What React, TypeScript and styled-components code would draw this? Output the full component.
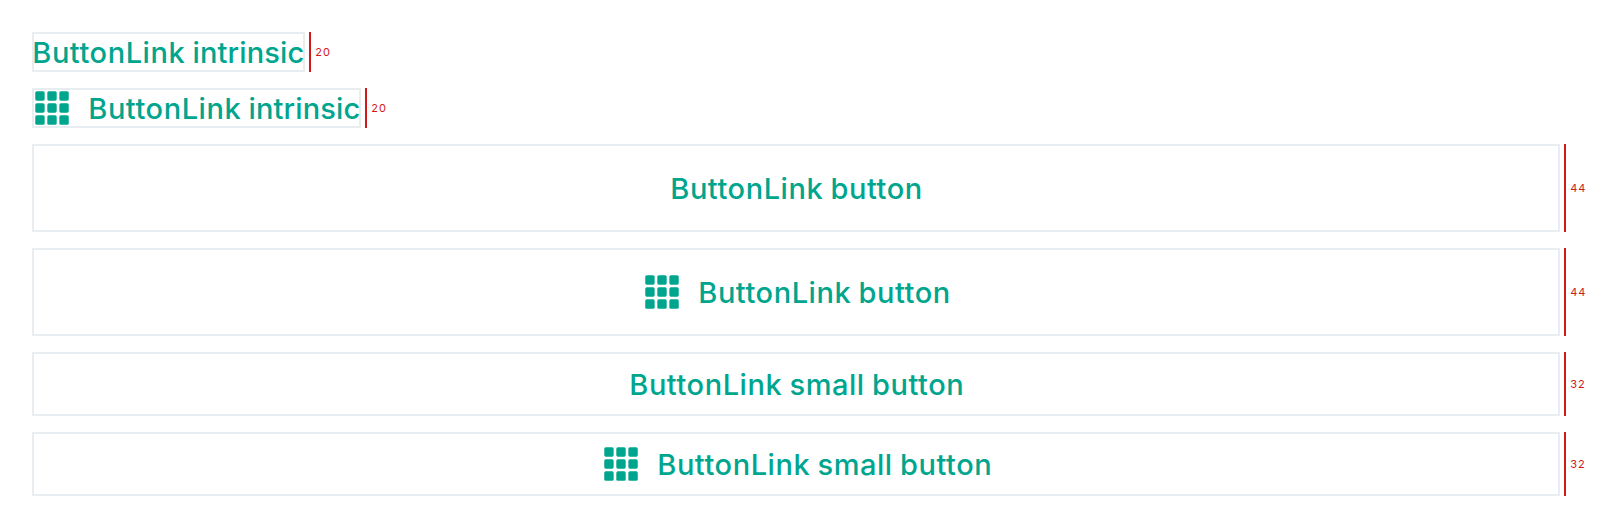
import React from 'react';
import styled, { createGlobalStyle } from 'styled-components';

const GlobalStyle = createGlobalStyle`
  body { margin: 0; background: #fff; }
  * { box-sizing: border-box; }
`;

const Page = styled.main`
  display: flex;
  flex-direction: column;
  gap: 16px;
  padding: 32px;
  height: 528px;
`;

const Row = styled.div<{ $height: number }>`
  display: flex;
  height: ${(p) => p.$height}px;
`;

const LinkButton = styled.button<{ $width?: number }>`
  display: flex;
  align-items: center;
  justify-content: ${(p) => (p.$width ? 'flex-start' : 'center')};
  gap: 16px;
  width: ${(p) => (p.$width ? `${p.$width}px` : '1528px')};
  padding: 0;
  border: 0;
  background: transparent;
  box-shadow: inset 0 0 0 2px #e8edf1;
  color: #00a58e;
`;

const Label = styled.span<{ $width: number }>`
  width: ${(p) => p.$width}px;
  padding-top: 1px;
  padding-left: 0.3px;
  font: 500 29px/39px Inter, sans-serif;
  font-optical-sizing: none;
  letter-spacing: 0.54px;
  word-spacing: -0.9px;
  white-space: nowrap;
  text-align: left;
`;

const TightWord = styled.span`
  letter-spacing: 0.12px;
`;

const Measure = styled.div`
  display: flex;
  align-items: center;
  margin-left: 4px;
  padding-left: 4.2px;
  border-left: 2px solid #d0191a;
  color: #d0191a;
  font: 400 11px/14px Inter, sans-serif;
  letter-spacing: 1px;
`;

const steps = [3.25, 15.3, 27.35];

const GridIcon = () => (
  <svg width="40" height="40" viewBox="0 0 40 40" fill="currentColor">
    {steps.map((y) => steps.map((x) => (
      <rect key={`${x}-${y}`} x={x} y={y} width="9.4" height="9.4" rx="1.6" />
    )))}
  </svg>
);

const intrinsic = <>ButtonLink <TightWord>intrinsic</TightWord></>;

const rows = [
  { text: intrinsic, size: 20, labelWidth: 273, width: 273 },
  { text: intrinsic, size: 20, labelWidth: 273, width: 329, icon: true },
  { text: 'ButtonLink button', size: 44, labelWidth: 252 },
  { text: 'ButtonLink button', size: 44, labelWidth: 252, icon: true },
  { text: 'ButtonLink small button', size: 32, labelWidth: 334 },
  { text: 'ButtonLink small button', size: 32, labelWidth: 334, icon: true },
];

export default function App() {
  return (
    <Page>
      <GlobalStyle />
      {rows.map((row, i) => (
        <Row key={i} $height={row.size * 2}>
          <LinkButton $width={row.width}>
            {row.icon && <GridIcon />}
            <Label $width={row.labelWidth}>{row.text}</Label>
          </LinkButton>
          <Measure>{row.size}</Measure>
        </Row>
      ))}
    </Page>
  );
}
